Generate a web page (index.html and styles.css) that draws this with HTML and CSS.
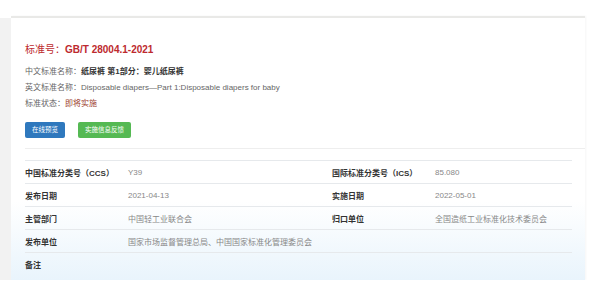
FILE: index.html
```html
<!DOCTYPE html>
<html lang="zh-CN">
<head>
  <meta charset="UTF-8" />
  <meta name="viewport" content="width=device-width, initial-scale=1.0" />
  <title>GB/T 28004.1-2021</title>
  <link rel="stylesheet" href="styles.css">
</head>
<body>
  <div class="page">
    <div class="side"></div>

    <!-- 标准信息卡片 -->
    <div class="card">
      <h1 class="std-title"><span class="std-label">标准号：</span>GB/T 28004.1-2021</h1>

      <ul class="meta">
        <li>中文标准名称：<b>纸尿裤 第1部分：婴儿纸尿裤</b></li>
        <li>英文标准名称：Disposable diapers—Part 1:Disposable diapers for baby</li>
        <li>标准状态：<span class="status">即将实施</span></li>
      </ul>

      <div class="actions">
        <a class="btn btn-blue" href="#">在线预览</a>
        <a class="btn btn-green" href="#">实施信息反馈</a>
      </div>

      <table class="detail">
        <colgroup>
          <col class="c-label"><col class="c-value-wide"><col class="c-label"><col>
        </colgroup>
        <tr>
          <th>中国标准分类号（CCS）</th><td>Y39</td>
          <th>国际标准分类号（ICS）</th><td>85.080</td>
        </tr>
        <tr>
          <th>发布日期</th><td>2021-04-13</td>
          <th>实施日期</th><td>2022-05-01</td>
        </tr>
        <tr>
          <th>主管部门</th><td>中国轻工业联合会</td>
          <th>归口单位</th><td>全国造纸工业标准化技术委员会</td>
        </tr>
        <tr>
          <th>发布单位</th><td colspan="3">国家市场监督管理总局、中国国家标准化管理委员会</td>
        </tr>
        <tr>
          <th>备注</th><td colspan="3"></td>
        </tr>
      </table>
    </div>
  </div>
</body>
</html>
```

FILE: styles.css
```css
body {
  margin: 0;
  background: #fff;
  font-family: "Liberation Sans", "Noto Sans CJK SC", sans-serif;
  color: #555;
}

.page {
  display: flex;
  margin-top: 16px;
  height: 264px;
}
.side {
  width: 11px;
  margin-top: 2px;
  background: #f2f2f2;
}
.card {
  width: 560px;
  padding-left: 14px;
  border-top: 2px solid #e9e9e7;
  box-shadow: 1px 0 2px rgba(0, 0, 0, 0.04);
  background: linear-gradient(to bottom, #fff 0%, #fff 70%, #e9f4fc 100%);
}

.std-title {
  margin: 25px 0 0;
  font-size: 10px;
  line-height: 14px;
  font-weight: bold;
  color: #bd2a2e;
}
.std-label {
  font-weight: normal;
  font-size: 10px;
}

.meta {
  list-style: none;
  margin: 7px 0 0;
  padding: 0;
  font-size: 8px;
  line-height: 16px;
  color: #666;
}
.meta b { color: #333; }
.status { color: #9a3b2c; }

.actions {
  display: flex;
  gap: 13px;
  margin-top: 10px;
  padding-bottom: 10px;
  border-bottom: 1px solid #eee;
}
.btn {
  display: inline-block;
  height: 16px;
  line-height: 16px;
  padding: 0 7px;
  border-radius: 2px;
  font-size: 6.5px;
  color: #fff;
  text-decoration: none;
}
.btn-blue { background: #2f78bd; }
.btn-green { background: #55b953; }

.detail {
  width: 547px;
  margin-top: 11px;
  border-collapse: collapse;
  font-size: 8px;
}
.c-label { width: 103px; }
.c-value-wide { width: 204px; }
.detail th,
.detail td {
  height: 22px;
  padding: 0;
  border-top: 1px solid #e6e9ec;
  text-align: left;
  vertical-align: middle;
}
.detail th {
  font-weight: bold;
  color: #333;
}
.detail td { color: #888; }
```
